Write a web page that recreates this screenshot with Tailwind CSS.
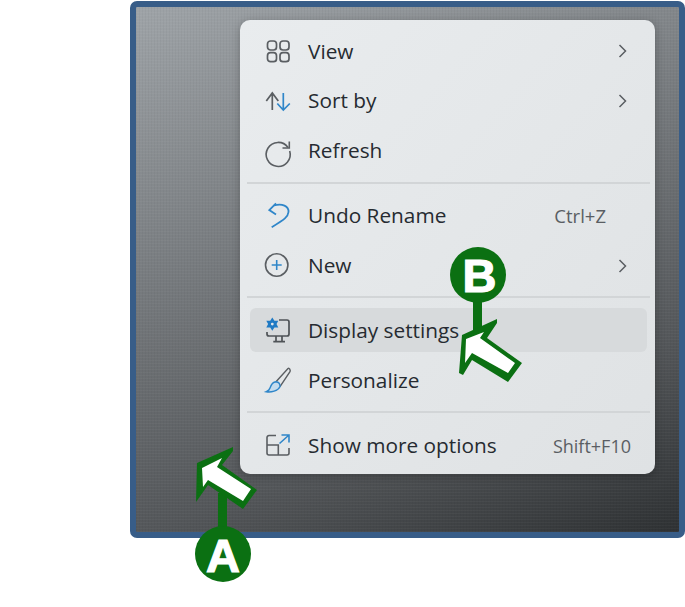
<!DOCTYPE html>
<html lang="en">
<head>
  <meta charset="UTF-8">
  <title>Desktop context menu</title>
  <script src="https://cdn.jsdelivr.net/npm/@tailwindcss/browser@4"></script>
</head>
<body class="bg-white w-[685px] h-[607px] overflow-hidden relative font-['Open_Sans','Noto_Sans',sans-serif]">
  <!-- desktop frame -->
  <div class="ml-[130px] mt-[1px] w-[555px] h-[537px] border-[6px] border-[#385d88] rounded-[7px] pl-[104px] pt-[13px] bg-[repeating-linear-gradient(0deg,rgba(255,255,255,0.03)_0_1px,transparent_1px_3px),repeating-linear-gradient(90deg,rgba(0,0,0,0.03)_0_1px,transparent_1px_3px),linear-gradient(160deg,#9fa4a8_0%,#54575a_73%,#2e3133_100%)]">
    <!-- context menu -->
    <div class="w-[415px] h-[454px] rounded-[10px] bg-linear-to-br from-[#e9ecee] to-[#dfe2e4] pt-[6px] text-[20.8px] text-[#262b31] shadow-[0_2px_10px_rgba(0,0,0,0.25)]">
      <div class="h-[50px] ml-[10px] mr-[8px] pl-[16px] pr-[20px] flex items-center gap-[18px]">
        <svg class="w-[24px] h-[24px] overflow-visible shrink-0" viewBox="0 0 24 24" fill="none" stroke="#5a5e62" stroke-width="1.7">
          <rect x="1.5" y="2" width="9" height="9" rx="3"/><rect x="14" y="2" width="9" height="9" rx="3"/>
          <rect x="1.5" y="13.7" width="9" height="9" rx="3"/><rect x="14" y="13.7" width="9" height="9" rx="3"/>
        </svg>
        <span class="flex-1 translate-y-[1px]">View</span>
        <svg class="w-[9px] h-[14px]" viewBox="0 0 9 14" fill="none" stroke="#5a5e62" stroke-width="1.5"><path d="M1.5 1l6 6-6 6"/></svg>
      </div>
      <div class="h-[50px] ml-[10px] mr-[8px] pl-[16px] pr-[20px] flex items-center gap-[18px]">
        <svg class="w-[24px] h-[24px] overflow-visible shrink-0" viewBox="0 0 24 24" fill="none" stroke-width="1.7">
          <path stroke="#5a5e62" d="M6.3 21V4M0.3 12l6-8 6 8"/>
          <path stroke="#2f86c9" d="M17.3 4v17M11.3 14.5l6 6.5 6.5-6.5"/>
        </svg>
        <span class="flex-1">Sort by</span>
        <svg class="w-[9px] h-[14px]" viewBox="0 0 9 14" fill="none" stroke="#5a5e62" stroke-width="1.5"><path d="M1.5 1l6 6-6 6"/></svg>
      </div>
      <div class="h-[50px] ml-[10px] mr-[8px] pl-[16px] pr-[20px] flex items-center gap-[18px]">
        <svg class="w-[24px] h-[24px] overflow-visible shrink-0" viewBox="0 0 24 24" fill="none" stroke="#5a5e62" stroke-width="1.6">
          <path d="M22 8.5A12 12 0 1 0 23.7 12"/><path d="M23.3 2.5V9H16.5"/>
        </svg>
        <span class="flex-1">Refresh</span>
      </div>
      <div class="h-[2px] mt-[6px] mb-[7px] ml-[7px] mr-[5px] bg-[#d2d5d7]"></div>
      <div class="h-[50px] ml-[10px] mr-[8px] pl-[16px] pr-[20px] flex items-center gap-[18px]">
        <svg class="w-[24px] h-[24px] overflow-visible shrink-0" viewBox="0 0 24 24" fill="none" stroke="#2f86c9" stroke-width="1.8">
          <path d="M10 -0.7L3.3 6L10 10.5"/><path d="M8 1.5C16 -1 23 2 22.5 8C22 13 19 15 5.7 23.3"/>
        </svg>
        <span class="flex-1">Undo Rename</span>
        <span class="mr-[21px] text-[18.5px] text-[#5a5e63]">Ctrl+Z</span>
      </div>
      <div class="h-[50px] ml-[10px] mr-[8px] pl-[16px] pr-[20px] flex items-center gap-[18px]">
        <svg class="w-[24px] h-[24px] overflow-visible shrink-0" viewBox="0 0 24 24" fill="none" stroke-width="1.6">
          <circle cx="10.7" cy="11" r="11.2" stroke="#5a5e62"/>
          <path stroke="#2f86c9" d="M5.7 11h10M10.7 6v10"/>
        </svg>
        <span class="flex-1">New</span>
        <svg class="w-[9px] h-[14px]" viewBox="0 0 9 14" fill="none" stroke="#5a5e62" stroke-width="1.5"><path d="M1.5 1l6 6-6 6"/></svg>
      </div>
      <div class="h-[2px] mt-[5px] mb-[10px] ml-[7px] mr-[5px] bg-[#d2d5d7]"></div>
      <div class="h-[44px] mb-[4px] ml-[10px] mr-[8px] pl-[16px] pr-[20px] flex items-center gap-[18px] bg-[#d7dadc] rounded-[6px]">
        <svg class="w-[24px] h-[24px] overflow-visible shrink-0 translate-y-[1px]" viewBox="0 0 24 24" fill="none" stroke="#4f5357" stroke-width="1.7">
          <path d="M13 1H21a2 2 0 0 1 2 2V15a2 2 0 0 1-2 2H3a2 2 0 0 1-2-2V13"/>
          <path d="M10 17v5M16 17v5M7.3 22.7H19"/>
          <path fill="#1f7ac4" stroke="none" d="M6.3 -1.5l2.1 3.3 3.9-.1-1.8 3.4 1.8 3.4-3.9-.1-2.1 3.3-2.1-3.3-3.9.1 1.8-3.4-1.8-3.4 3.9.1z"/>
          <circle cx="6.3" cy="5.1" r="1.4" fill="#e3e6e8" stroke="none"/>
        </svg>
        <span class="flex-1 translate-y-[1px]">Display settings</span>
      </div>
      <div class="h-[50px] ml-[10px] mr-[8px] pl-[16px] pr-[20px] flex items-center gap-[18px]">
        <svg class="w-[24px] h-[24px] overflow-visible shrink-0" viewBox="0 0 24 24" fill="none" stroke-width="1.4">
          <path stroke="#5a5e62" d="M10 12.7L22 -0.5C23.2 -1.5 24.8 1 24 2.7L14 17.7"/>
          <path fill="#c5dcee" stroke="#2f86c9" d="M10 12.7C6 13 5 16 4 19C3.5 21 2 22 0.3 22.7C5 23.5 12 22 14 17.7C14.2 15 12.5 13 10 12.7Z"/>
        </svg>
        <span class="flex-1">Personalize</span>
      </div>
      <div class="h-[2px] mt-[5px] mb-[8px] ml-[7px] mr-[5px] bg-[#d2d5d7]"></div>
      <div class="h-[50px] ml-[10px] mr-[8px] pl-[16px] pr-[16px] flex items-center gap-[18px]">
        <svg class="w-[24px] h-[24px] overflow-visible shrink-0" viewBox="0 0 24 24" fill="none" stroke-width="1.6">
          <path stroke="#5a5e62" d="M10 1.5H3a2 2 0 0 0-2 2V19a2 2 0 0 0 2 2H21a2 2 0 0 0 2-2V14M1 11H12.3V21"/>
          <path stroke="#2f86c9" d="M13.5 9.5L23 1M15.5 1H23V8.5"/>
        </svg>
        <span class="flex-1">Show more options</span>
        <span class="text-[18px] text-[#5a5e63]">Shift+F10</span>
      </div>
    </div>
  </div>

  <!-- callouts A and B -->
  <svg class="absolute left-0 top-0 w-[685px] h-[607px]" viewBox="0 0 685 607">
    <path fill="#0b7012" d="M218 493h9v40h-9z"/>
    <path fill="#0b7012" d="M233 447L197 463L196 502L208 485L243 509L257 490L222 465L233 451Z"/>
    <path fill="#fff" d="M222 458L202 468L203 487L208 480L243 501L251 489L217 467Z"/>
    <circle cx="223" cy="554" r="28" fill="#0b7012"/>
    <text x="223" y="571.5" text-anchor="middle" font-family="'Liberation Sans',sans-serif" font-weight="700" font-size="47" stroke="#fff" stroke-width="1.2" fill="#fff">A</text>

    <path fill="#0b7012" d="M473 295h9v38h-9z"/>
    <path fill="#0b7012" d="M497 319L462 335L459 373L463 375L472 360L508 382L522 363L487 338L497 323Z"/>
    <path fill="#fff" d="M484 332L466 339L465 363L472 353L508 373L515 363L480 338Z"/>
    <circle cx="478" cy="275" r="28" fill="#0b7012"/>
    <text x="479.5" y="291.5" text-anchor="middle" font-family="'Liberation Sans',sans-serif" font-weight="700" font-size="47" stroke="#fff" stroke-width="1.2" fill="#fff">B</text>
  </svg>
</body>
</html>
